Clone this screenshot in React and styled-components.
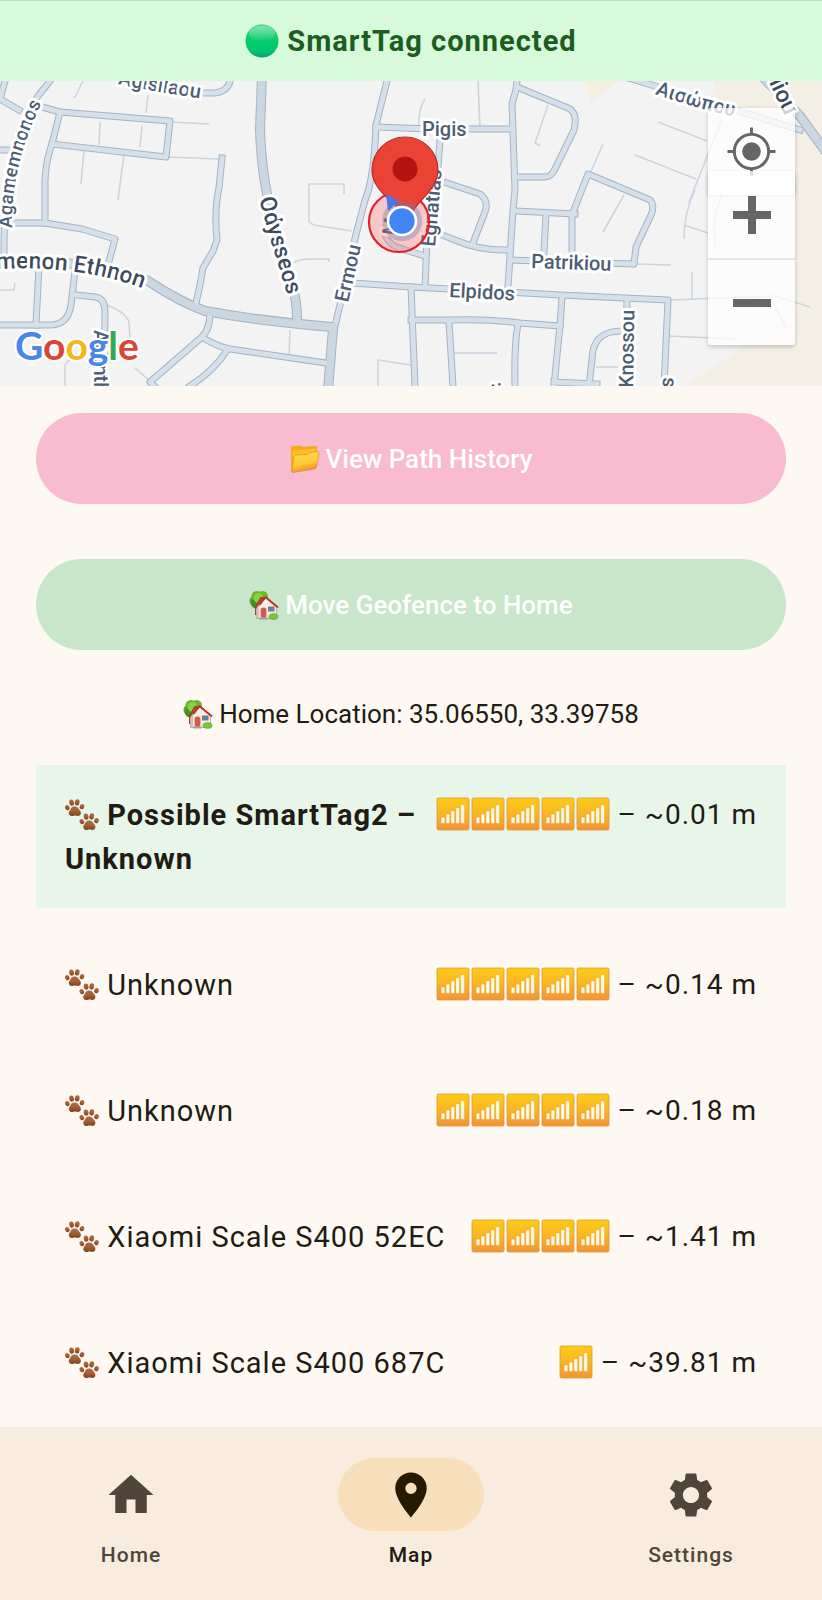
import React from "react";
import styled, { createGlobalStyle } from "styled-components";

const GlobalStyle = createGlobalStyle`
  *, *::before, *::after { box-sizing: border-box; }
  body {
    margin: 0;
    background: #fef8f2;
    color: #201b13;
    font-family: Roboto, "Liberation Sans", sans-serif;
  }
  button { font-family: inherit; border: 0; cursor: pointer; }
`;

const Screen = styled.div`
  min-height: 100vh;
  display: flex;
  flex-direction: column;
`;

const StatusBanner = styled.header`
  display: flex;
  align-items: center;
  justify-content: center;
  gap: 8px;
  height: 81px;
  border-top: 1px solid #b9d8bd;
  background: #d7fada;
  color: #1b5e20;
  font-size: 29px;
  font-weight: 700;
  line-height: 44px;
  letter-spacing: 1px;
`;

const MapPanel = styled.section`
  position: relative;
  height: 305px;
  overflow: hidden;
  background: #f4f3f4;
`;

const MapDrawing = styled.svg`
  display: block;
  width: 100%;
  height: 100%;
  font-family: Roboto, "Liberation Sans", sans-serif;
`;

const MapLabel = styled.text`
  font-size: ${(p) => (p.$major ? 23 : p.$small ? 19 : 20)}px;
  font-weight: 500;
  fill: ${(p) => (p.$major ? "#3d4a5c" : "#4d5d72")};
  stroke: #ffffff;
  stroke-width: 6px;
  stroke-linejoin: round;
  paint-order: stroke;
`;

const Wordmark = styled.text`
  font-family: Lato, "Open Sans", sans-serif;
  font-size: 39px;
  font-weight: 700;
  stroke: #ffffff;
  stroke-width: 4px;
  stroke-linejoin: round;
  paint-order: stroke;
`;

const MapControls = styled.div`
  position: absolute;
  top: 27px;
  right: 27px;
  width: 87px;
  display: flex;
  flex-direction: column;
`;

const MapButton = styled.button`
  display: grid;
  place-items: center;
  width: 100%;
  height: 87px;
  padding: 0;
  background: transparent;
  color: #666666;
  & + & { border-top: 2px solid #e4e4e2; }
`;

const LocateButton = styled(MapButton)`
  background: rgba(255, 255, 255, 0.75);
  box-shadow: 0 1px 4px rgba(0, 0, 0, 0.2);
  border-radius: 2px;
`;

const ZoomCard = styled.div`
  margin-top: -24px;
  border-radius: 3px;
  background: rgba(255, 255, 255, 0.75);
  box-shadow: 0 2px 4px rgba(0, 0, 0, 0.2);
`;

const Content = styled.main`
  flex: 1;
  display: flex;
  flex-direction: column;
  padding: 27px 36px 15px;
`;

const Actions = styled.div`
  display: flex;
  flex-direction: column;
  gap: 55px;
`;

const ActionButton = styled.button`
  display: flex;
  align-items: center;
  justify-content: center;
  gap: 6px;
  width: 100%;
  height: 91px;
  border-radius: 46px;
  background: ${(p) => (p.$tone === "pink" ? "#f8bbd0" : "#c8e6c9")};
  color: #ffffff;
  font-size: 26px;
  font-weight: 500;
`;

const HomeLocation = styled.p`
  display: flex;
  align-items: center;
  justify-content: center;
  gap: 6px;
  margin: 46px 0 33px;
  font-size: 26px;
  line-height: 36px;
`;

const DeviceList = styled.ul`
  display: flex;
  flex-direction: column;
  gap: 27px;
  margin: 0;
  padding: 0;
  list-style: none;
`;

const DeviceRow = styled.li`
  display: flex;
  justify-content: space-between;
  padding: 28px 29px 27px;
  background: ${(p) => (p.$highlight ? "#e8f5e9" : "transparent")};
  font-size: 29px;
  line-height: 44px;
  letter-spacing: 1px;
`;

const DeviceName = styled.span`
  flex: 1;
  font-weight: ${(p) => (p.$highlight ? 700 : 400)};
`;

const Signal = styled.span`
  font-size: 28px;
  white-space: nowrap;
`;

const Glyph = styled.svg`
  display: inline-block;
  width: ${(p) => p.$size}px;
  height: ${(p) => p.$size}px;
  vertical-align: -7px;
`;

const NavBar = styled.nav`
  display: flex;
  justify-content: space-around;
  padding: 31px 0 30px;
  gap: 18px;
  background: #f8ecde;
`;

const NavItem = styled.a`
  flex: 1;
  display: flex;
  flex-direction: column;
  align-items: center;
  gap: 10px;
  color: ${(p) => (p.$active ? "#201b13" : "#4f4539")};
  font-size: 21px;
  font-weight: 500;
  line-height: 29px;
  letter-spacing: 1px;
  text-decoration: none;
`;

const NavPill = styled.span`
  display: grid;
  place-items: center;
  width: 146px;
  height: 73px;
  border-radius: 37px;
  background: ${(p) => (p.$active ? "#f7dfbb" : "transparent")};
  color: ${(p) => (p.$active ? "#261900" : "#4f4539")};
`;

const GreenDot = () => (
  <Glyph $size={34} viewBox="0 0 34 34" aria-hidden="true">
    <defs>
      <linearGradient id="dot" x1="0" y1="0" x2="0" y2="1">
        <stop offset="0" stopColor="#3cc481" />
        <stop offset="0.45" stopColor="#06cf6b" />
        <stop offset="0.8" stopColor="#00c56f" />
        <stop offset="1" stopColor="#0b9f72" />
      </linearGradient>
      <linearGradient id="dotShine" x1="0" y1="0" x2="0" y2="1">
        <stop offset="0" stopColor="#7be8ae" />
        <stop offset="1" stopColor="#7be8ae" stopOpacity="0" />
      </linearGradient>
    </defs>
    <circle cx="17" cy="17" r="16.500" fill="url(#dot)" />
    <ellipse cx="17" cy="9.500" rx="13" ry="8" fill="url(#dotShine)" />
  </Glyph>
);

const Folder = () => (
  <Glyph $size={30} viewBox="0 0 30 30" aria-hidden="true">
    <defs>
      <linearGradient id="folderFront" x1="0" y1="0" x2="0.3" y2="1">
        <stop offset="0" stopColor="#ffdf5e" />
        <stop offset="0.65" stopColor="#ffc934" />
        <stop offset="1" stopColor="#f08d2c" />
      </linearGradient>
    </defs>
    <path d="M1 28 L1 4 Q1 2 3 2 L11 1.500 L13 3 L25 2 Q27 2 27 4 L27 10 Z" fill="#f6a91b" />
    <path d="M2 7 L25 4.500 L25 9 L3 14Z" fill="#ffbf25" />
    <path d="M1.500 28 L4 13 Q4.500 11 6.500 11 L18 10.500 L20 8.500 L27 7.500 Q29.500 7.500 29 10 L26.500 23 Q26 25 24 25 L3 28.500Z" fill="url(#folderFront)" stroke="#dd9125" strokeWidth="0.700" />
  </Glyph>
);

const HouseTree = () => (
  <Glyph $size={30} viewBox="0 0 30 30" aria-hidden="true">
    <path d="M6 13 h4 v12 h-4z" fill="#855238" />
    <circle cx="5.500" cy="11" r="5" fill="#55a42d" />
    <circle cx="8" cy="6.500" r="5.500" fill="#65b52c" />
    <circle cx="13.500" cy="6.500" r="5.500" fill="#67b82e" />
    <circle cx="7" cy="13.500" r="5" fill="#3f9029" />
    <circle cx="9.500" cy="8" r="5" fill="#88d13f" />
    <path d="M7.500 17 L17 8 L27.500 17 V28.500 H7.500Z" fill="#f9eae3" stroke="#bd9f94" strokeWidth="0.800" />
    <path d="M7.500 16 V28 H10 V14Z" fill="#d9beb1" />
    <path d="M6.500 18 L12 8 L17 7.500 L29 17.500" fill="none" stroke="#b5382c" strokeWidth="2" strokeLinejoin="round" />
    <path d="M9 16 L13 8.500 L17 8 L11.500 15Z" fill="#a23a30" />
    <rect x="12" y="18" width="5" height="9.500" rx="1.500" fill="#de5046" stroke="#9f7774" strokeWidth="0.800" />
    <rect x="19.500" y="17" width="5.500" height="4" fill="#4c8dae" stroke="#806d70" strokeWidth="0.900" />
    <rect x="10" y="27.500" width="9" height="2" fill="#b49a96" />
    <ellipse cx="24.500" cy="26.500" rx="4.500" ry="2.800" fill="#79c831" stroke="#4a9d2b" strokeWidth="0.700" />
  </Glyph>
);

const Paw = ({ x, y }) => (
  <g transform={`translate(${x} ${y})`} fill="url(#pawFill)">
    <ellipse cx="2.300" cy="8.600" rx="2.200" ry="2.600" transform="rotate(-25 2.300 8.600)" />
    <ellipse cx="6.600" cy="3.600" rx="2.400" ry="3.100" transform="rotate(-8 6.600 3.600)" />
    <ellipse cx="12.200" cy="3.400" rx="2.400" ry="3.100" transform="rotate(8 12.200 3.400)" />
    <ellipse cx="17" cy="7.700" rx="2.200" ry="2.600" transform="rotate(25 17 7.700)" />
    <path d="M9.500 7.500 C12.800 7.500 13.500 9.800 15 11.500 C17 14 15.500 17 12.800 17 C11 17 10.500 16.500 9.500 16.600 C8.500 16.700 8 17.200 6.500 17 C3.600 16.600 3 13.500 4.800 11.500 C6 9.800 6.300 7.500 9.500 7.500Z" />
  </g>
);

const Paws = () => (
  <Glyph $size={34} viewBox="0 0 34 34" aria-hidden="true">
    <defs>
      <linearGradient id="pawFill" x1="0" y1="0" x2="0" y2="1">
        <stop offset="0" stopColor="#ad6c4a" />
        <stop offset="0.5" stopColor="#a4602f" />
        <stop offset="1" stopColor="#7b4220" />
      </linearGradient>
    </defs>
    <Paw x={0} y={1} />
    <Paw x={14.5} y={15} />
  </Glyph>
);

const SignalBars = () => (
  <Glyph $size={34} viewBox="0 0 34 34" aria-hidden="true">
    <defs>
      <linearGradient id="tile" x1="0" y1="0" x2="0" y2="1">
        <stop offset="0" stopColor="#fecb18" />
        <stop offset="0.5" stopColor="#f8b526" />
        <stop offset="1" stopColor="#f39337" />
      </linearGradient>
    </defs>
    <rect x="1" y="1" width="32" height="32" rx="1.500" fill="url(#tile)" stroke="#dc9a35" strokeWidth="0.800" />
    {[0, 1, 2, 3, 4].map((i) => (
      <rect
        key={i}
        x={5.3 + i * 4.9}
        y={20.3 - i * 3.1}
        width="3.400"
        height={6 + i * 3.1}
        rx="0.500"
        fill="#fffbea"
        stroke="#e9a63e"
        strokeWidth="0.300"
      />
    ))}
  </Glyph>
);

const SignalIcons = styled.span`
  display: inline-flex;
  gap: 1px;
  vertical-align: -7px;
`;

const HomeIcon = () => (
  <svg width="54" height="54" viewBox="0 0 24 24" fill="currentColor" aria-hidden="true">
    <path d="M10 20v-6h4v6h5v-8h3L12 3 2 12h3v8z" />
  </svg>
);

const PlaceIcon = () => (
  <svg width="54" height="54" viewBox="0 0 24 24" fill="currentColor" aria-hidden="true">
    <path d="M12 2C8.130 2 5 5.130 5 9c0 5.250 7 13 7 13s7-7.750 7-13c0-3.870-3.130-7-7-7zm0 9.500c-1.380 0-2.500-1.120-2.500-2.500s1.120-2.500 2.500-2.500 2.500 1.120 2.500 2.500-1.120 2.500-2.500 2.500z" />
  </svg>
);

const SettingsIcon = () => (
  <svg width="54" height="54" viewBox="0 0 24 24" fill="currentColor" aria-hidden="true">
    <path d="M19.140 12.940c.04-.3.06-.61.06-.94 0-.32-.02-.64-.07-.94l2.030-1.580c.18-.14.23-.41.12-.61l-1.920-3.320c-.12-.22-.37-.29-.59-.22l-2.390.96c-.5-.38-1.030-.7-1.620-.94l-.36-2.540c-.04-.24-.24-.41-.48-.41h-3.840c-.24 0-.43.17-.47.41l-.36 2.540c-.59.24-1.130.57-1.620.94l-2.390-.96c-.22-.08-.47 0-.59.22L2.740 8.870c-.12.21-.08.47.12.61l2.030 1.580c-.05.3-.09.63-.09.94s.02.64.07.94l-2.030 1.580c-.18.14-.23.41-.12.61l1.920 3.320c.12.22.37.29.59.22l2.390-.96c.5.38 1.030.7 1.620.94l.36 2.540c.05.24.24.41.48.41h3.840c.24 0 .44-.17.47-.41l.36-2.540c.59-.24 1.130-.56 1.620-.94l2.390.96c.22.08.47 0 .59-.22l1.920-3.320c.12-.22.07-.47-.12-.61l-2.010-1.580zM12 15.600c-1.980 0-3.600-1.620-3.600-3.600s1.620-3.600 3.600-3.600 3.600 1.620 3.600 3.600-1.620 3.600-3.600 3.600z" />
  </svg>
);

const LocateIcon = () => (
  <svg width="49" height="49" viewBox="0 0 50 50" fill="none" stroke="currentColor" aria-hidden="true">
    <circle cx="25" cy="25" r="17.500" strokeWidth="3" />
    <circle cx="25" cy="25" r="9.500" fill="currentColor" stroke="none" />
    <path d="M25 0.500V8 M25 42V49.500 M0.500 25H8 M42 25H49.500" strokeWidth="3" />
  </svg>
);

const PlusIcon = () => (
  <svg width="38" height="38" viewBox="0 0 38 38" stroke="currentColor" strokeWidth="8" aria-hidden="true">
    <path d="M19 0V38 M0 19H38" />
  </svg>
);

const MinusIcon = () => (
  <svg width="38" height="38" viewBox="0 0 38 38" stroke="currentColor" strokeWidth="8" aria-hidden="true">
    <path d="M0 19H38" />
  </svg>
);

const lanes = [
  "M83 81L75 97L73 97",
  "M148 95L146 113 M100 122L99 145 M142 126L140 147",
  "M170 122L209 124 M167 157L219 159",
  "M84 150L81 184 M124 154L118 200",
  "M344 194L344 184L309 184L309 221Q310 225 320 226L352 231",
  "M293 263Q300 259 310 259L329 259L329 262",
  "M0 290L14 290L15 283",
  "M106 305Q126 312 129 322L130 340 M65 386L65 366Q66 361 73 359 M135 368L150 381",
  "M378 386L378 360Q390 362 411 365",
  "M478 81L480 128 M425 99Q418 109 419 127",
  "M548 105L535 143L540 146 M603 144L590 174",
  "M658 122L707 141 M635 155L696 179 M689 202L722 119",
  "M695 190Q684 212 684 239 M684 225L708 233 M724 190Q710 220 716 248",
  "M624 195L603 232 M636 264L671 265 M692 272L692 299",
  "M671 300L775 296L810 307 M668 336L735 339 M770 298L786 327",
  "M453 353L497 353 M290 330L289 356 M596 367L618 367",
];

const minorRoads = [
  "M5 81L0 99L19 110",
  "M50 81L38 96Q20 125 10 170Q4 200 4 253",
  "M38 106L60 112L170 121L166 157L52 144",
  "M60 112L52 144Q46 160 45 180L45 223",
  "M8 223L45 223L82 229L115 239L108 265",
  "M222 158L219 188Q214 210 217 240L213 251L203 268L200 285L196 303",
  "M195 93L215 93Q228 91 230 81",
  "M387 81L376 125Q374 180 365 200L352 250L340 305L334 330",
  "M376 127L430 129L511 129",
  "M0 150L8 150",
  "M517 81L516 90L512 104L515 190L513 210L508 287",
  "M517 87L568 108Q578 112 574 130L555 169Q551 177 545 177L515 177",
  "M572 254L572 215L588 174L650 200Q655 206 651 215L636 247L634 264L511 260",
  "M515 211L575 214 M546 213L544 252",
  "M447 183L480 194Q489 201 485 212L473 243",
  "M437 233L455 240Q480 251 510 250",
  "M440 140L437 180L427 240L425 287",
  "M385 235Q388 246 405 250L425 256",
  "M352 283L411 287L508 292L560 295L668 300L664 386",
  "M411 287L415 386",
  "M411 320L450 320Q490 319 520 323L560 326",
  "M449 322L453 386",
  "M518 324Q514 345 515 386",
  "M562 297L560 325L554 386 M554 382L597 384",
  "M627 300L625 386",
  "M620 331Q592 331 592 360L589 386",
  "M39 265L36 325",
  "M0 325L50 325Q68 325 71 305L76 262",
  "M76 295L95 297Q105 298 105 312L104 386",
  "M210 314Q210 329 202 337L150 382L154 386",
  "M202 337Q215 346 230 349L326 363",
  "M227 350Q215 370 190 386",
  "M625 77L655 86L735 110L800 130",
];

const majorRoads = [
  "M262 76L260 130Q262 180 272 215L292 285Q297 300 297 320",
  "M0 262Q90 258 148 281Q180 302 205 311Q260 321 332 327",
  "M333 329L328 390",
  "M760 74L800 116L826 152",
];

function StreetMap() {
  return (
    <MapDrawing viewBox="0 81 822 305" preserveAspectRatio="xMidYMid slice" role="img" aria-label="Map">
      <defs>
        <path id="agamemnonos" d="M12 228C11 190 20 145 44 98" />
        <path id="ethnon" d="M-4 269Q95 264 165 298" />
        <path id="odysseos" d="M259 199Q270 240 291 306" />
        <path id="agisilaou" d="M118 84Q160 93 220 101" />
        <path id="aisopou" d="M655 94Q690 107 745 119" />
      </defs>

      <path d="M714 81L717 108L770 125L795 140V320L735 352L686 386H822V81Z" fill="#f4efe5" />
      <path d="M584 81L591 102L620 81Z" fill="#f5efe0" />

      <g fill="none" stroke="#cbd5df" strokeWidth="1.600">
        {lanes.map((d) => <path key={d} d={d} />)}
      </g>
      <g fill="none" strokeLinejoin="round" strokeLinecap="square">
        <g stroke="#a4b3c4" strokeWidth="7">
          {minorRoads.map((d) => <path key={d} d={d} />)}
        </g>
        <g stroke="#a4b3c4" strokeWidth="10">
          {majorRoads.map((d) => <path key={d} d={d} />)}
        </g>
        <g stroke="#d6e0ea" strokeWidth="5">
          {minorRoads.map((d) => <path key={d} d={d} />)}
        </g>
        <g stroke="#cad6e0" strokeWidth="8">
          {majorRoads.map((d) => <path key={d} d={d} />)}
        </g>
      </g>

      <MapLabel $small><textPath href="#agamemnonos">Agamemnonos</textPath></MapLabel>
      <MapLabel $major><textPath href="#ethnon">menon Ethnon</textPath></MapLabel>
      <MapLabel $major><textPath href="#odysseos">Odysseos</textPath></MapLabel>
      <MapLabel><textPath href="#agisilaou">Agisilaou</textPath></MapLabel>
      <MapLabel><textPath href="#aisopou">Αισώπου</textPath></MapLabel>
      <MapLabel $major transform="translate(769 82) rotate(65)">liou</MapLabel>
      <MapLabel x="422" y="136">Pigis</MapLabel>
      <MapLabel transform="translate(348 303) rotate(-77)">Ermou</MapLabel>
      <MapLabel transform="translate(435 247) rotate(-85)">Egnatias</MapLabel>
      <MapLabel transform="translate(531 268) rotate(2)">Patrikiou</MapLabel>
      <MapLabel transform="translate(449 297) rotate(3)">Elpidos</MapLabel>
      <MapLabel transform="translate(633 388) rotate(-89)">Knossou</MapLabel>
      <MapLabel transform="translate(673 388) rotate(-86)">s</MapLabel>
      <MapLabel transform="translate(94 330) rotate(90)">Acanth</MapLabel>
      <MapLabel x="490" y="398">ti</MapLabel>
      <MapLabel transform="translate(396 236) rotate(-82)">M</MapLabel>

      <circle cx="399" cy="222" r="30" fill="#ff3030" fillOpacity="0.220" stroke="#e5202e" strokeWidth="2.200" />
      <path d="M405 215C396 203 372 191 372 170A33 33 0 0 1 438 170C438 188 420 199 413 211C410 215 408 218 405 219Z" fill="#ea4335" stroke="#b92b25" strokeWidth="1.200" />
      <circle cx="405" cy="169" r="12.500" fill="#b31412" />
      <circle cx="402" cy="221" r="20" fill="#6f7ba8" fillOpacity="0.380" />
      <path d="M386 194L399 201L388 211Z" fill="#4979e8" />
      <circle cx="402" cy="221" r="14" fill="#4285f4" stroke="#ffffff" strokeWidth="2.600" />

      <Wordmark x="15" y="360">
        <tspan fill="#4a86e8">G</tspan>
        <tspan fill="#db4437">o</tspan>
        <tspan fill="#f0b81c">o</tspan>
        <tspan fill="#4a86e8">g</tspan>
        <tspan fill="#35a853">l</tspan>
        <tspan fill="#db4437">e</tspan>
      </Wordmark>
    </MapDrawing>
  );
}

const devices = [
  { name: "Possible SmartTag2 – Unknown", bars: 5, distance: "~0.01 m", highlight: true },
  { name: "Unknown", bars: 5, distance: "~0.14 m" },
  { name: "Unknown", bars: 5, distance: "~0.18 m" },
  { name: "Xiaomi Scale S400 52EC", bars: 4, distance: "~1.41 m" },
  { name: "Xiaomi Scale S400 687C", bars: 1, distance: "~39.81 m" },
];

const tabs = [
  { label: "Home", Icon: HomeIcon },
  { label: "Map", Icon: PlaceIcon, active: true },
  { label: "Settings", Icon: SettingsIcon },
];

export default function App() {
  return (
    <Screen>
      <GlobalStyle />
      <StatusBanner>
        <GreenDot />
        <span>SmartTag connected</span>
      </StatusBanner>

      <MapPanel>
        <StreetMap />
        <MapControls>
          <LocateButton aria-label="My location"><LocateIcon /></LocateButton>
          <ZoomCard>
            <MapButton aria-label="Zoom in"><PlusIcon /></MapButton>
            <MapButton aria-label="Zoom out"><MinusIcon /></MapButton>
          </ZoomCard>
        </MapControls>
      </MapPanel>

      <Content>
        <Actions>
          <ActionButton $tone="pink"><Folder /><span>View Path History</span></ActionButton>
          <ActionButton $tone="green"><HouseTree /><span>Move Geofence to Home</span></ActionButton>
        </Actions>
        <HomeLocation><HouseTree /><span>Home Location: 35.06550, 33.39758</span></HomeLocation>
        <DeviceList>
          {devices.map((device) => (
            <DeviceRow key={device.distance} $highlight={device.highlight}>
              <DeviceName $highlight={device.highlight}><Paws /> {device.name}</DeviceName>
              <Signal>
                <SignalIcons>
                  {Array.from({ length: device.bars }, (_, i) => <SignalBars key={i} />)}
                </SignalIcons>
                {" – "}{device.distance}
              </Signal>
            </DeviceRow>
          ))}
        </DeviceList>
      </Content>

      <NavBar>
        {tabs.map(({ label, Icon, active }) => (
          <NavItem key={label} href={`#${label.toLowerCase()}`} $active={active} aria-current={active ? "page" : undefined}>
            <NavPill $active={active}><Icon /></NavPill>
            <span>{label}</span>
          </NavItem>
        ))}
      </NavBar>
    </Screen>
  );
}
